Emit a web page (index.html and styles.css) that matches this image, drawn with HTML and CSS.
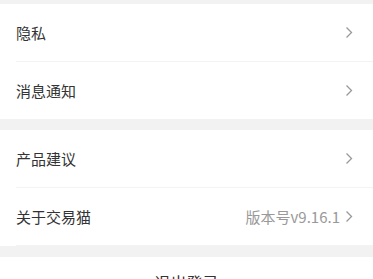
FILE: index.html
```html
<!DOCTYPE html>
<html>

<head>
    <title>设置</title>
    <link rel="stylesheet" href="styles.css">
</head>

<body>
    <div class="page">
        <div class="group">
            <div class="item">
                <div class="item-inner line">
                    <span class="label">隐私</span>
                    <span class="right">
                        <svg class="arrow" width="8" height="13" viewBox="0 0 8 13"><polyline points="1.5,1.5 6.5,6.5 1.5,11.5" /></svg>
                    </span>
                </div>
            </div>
            <div class="item">
                <div class="item-inner">
                    <span class="label">消息通知</span>
                    <span class="right">
                        <svg class="arrow" width="8" height="13" viewBox="0 0 8 13"><polyline points="1.5,1.5 6.5,6.5 1.5,11.5" /></svg>
                    </span>
                </div>
            </div>
        </div>

        <div class="group">
            <div class="item">
                <div class="item-inner line">
                    <span class="label">产品建议</span>
                    <span class="right">
                        <svg class="arrow" width="8" height="13" viewBox="0 0 8 13"><polyline points="1.5,1.5 6.5,6.5 1.5,11.5" /></svg>
                    </span>
                </div>
            </div>
            <div class="item">
                <div class="item-inner line">
                    <span class="label">关于交易猫</span>
                    <span class="right">
                        <span class="extra">版本号v9.16.1</span>
                        <svg class="arrow" width="8" height="13" viewBox="0 0 8 13"><polyline points="1.5,1.5 6.5,6.5 1.5,11.5" /></svg>
                    </span>
                </div>
            </div>
        </div>

        <div class="logout">退出登录</div>
    </div>
</body>

</html>
```

FILE: styles.css
```css
body {
    margin: 0;
    background-color: #f2f2f2;
    font-family: "Noto Sans CJK SC", "Noto Sans", sans-serif;
}

.page {
    padding-top: 4px;
}

.group {
    background-color: #fff;
    margin-bottom: 11px;
}

.item {
    padding-left: 16px;
}

.item-inner {
    height: 57px;
    display: flex;
    align-items: center;
    justify-content: space-between;
    padding-right: 20px;
}

.line {
    border-bottom: 1px solid #f3f3f3;
}

.label {
    font-size: 15px;
    color: #333;
}

.right {
    display: flex;
    align-items: center;
}

.extra {
    font-size: 15px;
    color: #999;
    margin-right: 5px;
}

.arrow {
    fill: none;
    stroke: #999;
    stroke-width: 1.3;
}

.logout {
    background-color: #fff;
    height: 50px;
    display: flex;
    align-items: center;
    justify-content: center;
    font-size: 16px;
    color: #333;
}
```
